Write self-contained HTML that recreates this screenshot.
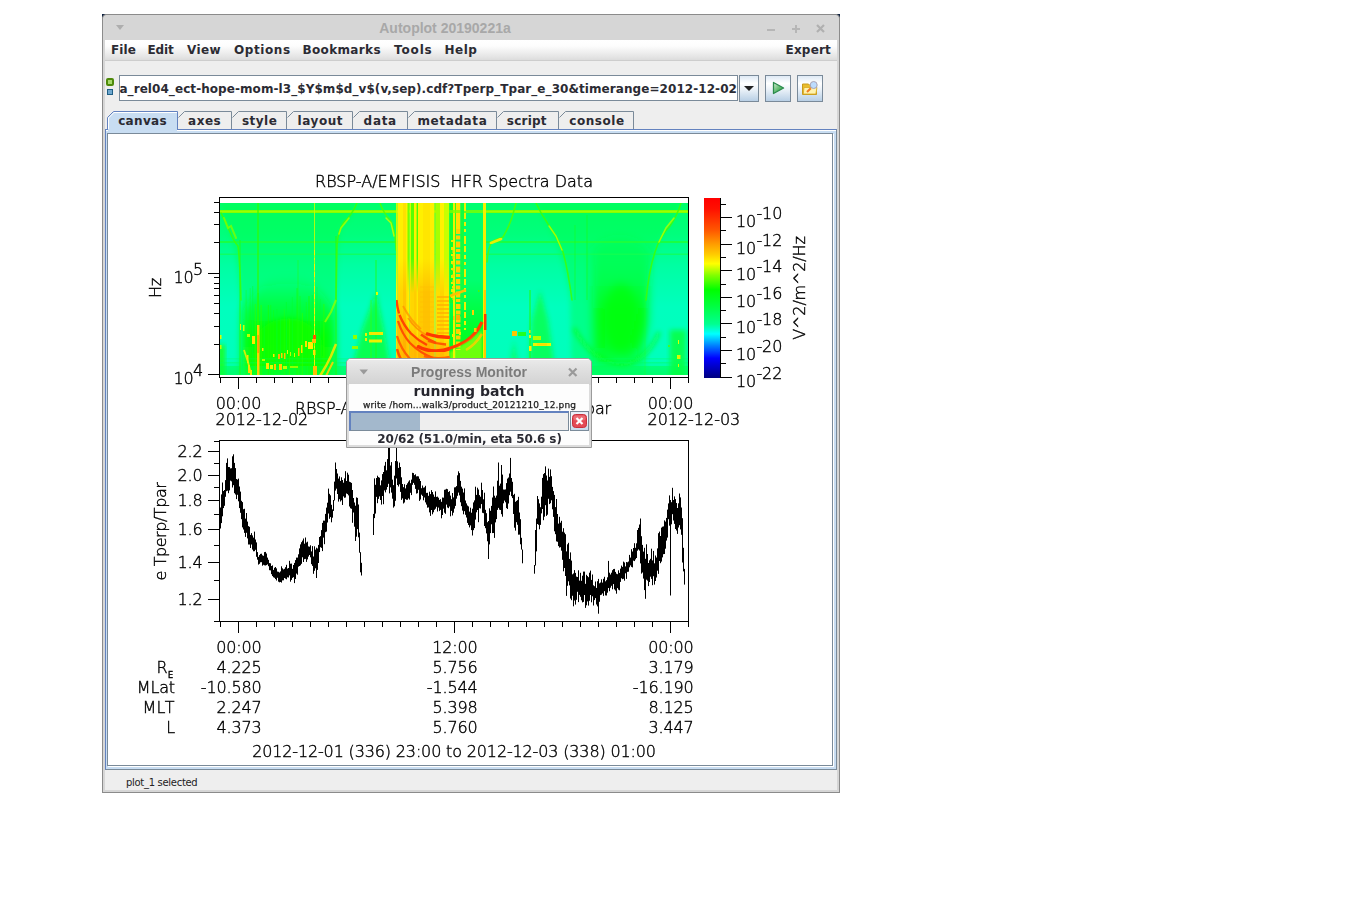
<!DOCTYPE html>
<html>
<head>
<meta charset="utf-8">
<title>Autoplot 20190221a</title>
<style>

html,body{margin:0;padding:0;background:#fff;}
body{width:1345px;height:916px;position:relative;overflow:hidden;font-family:"DejaVu Sans","Liberation Sans",sans-serif;color:#333;}
div,span{box-sizing:border-box;}
.a{position:absolute;}
.b12{font:bold 12px "DejaVu Sans","Liberation Sans",sans-serif;color:#2b2b33;white-space:nowrap;line-height:14px;}
#win{position:absolute;left:102px;top:14px;width:738px;height:779px;background:#eee;border:1px solid #8b8b8b;}
#wframe{position:absolute;left:103px;top:15px;width:736px;height:777px;border:2px solid #d6d6d6;border-top:none;}
#title{position:absolute;left:103px;top:15px;width:736px;height:25px;background:#d6d6d6;}
#title .t{position:absolute;left:242px;width:200px;top:5px;text-align:center;font:bold 14px "Liberation Sans",sans-serif;color:#a8a8a8;line-height:17px;}
#menubar{position:absolute;left:105px;top:40px;width:732px;height:20px;background:linear-gradient(#ffffff 0%,#fdfdfd 30%,#e4e4e4 85%,#dcdcdc 100%);}
#menusep{position:absolute;left:105px;top:60px;width:732px;height:1px;background:#cdcdcd;}
#menubar span{position:absolute;top:3px;}
#url{position:absolute;left:119px;top:75px;width:619px;height:26px;border:1px solid #7a8a99;background:#fff;overflow:hidden;}
#url span{position:absolute;right:0px;top:6px;letter-spacing:0.07px;}
.btn{position:absolute;top:75px;height:27px;border:1px solid #7a8a99;background:linear-gradient(#dfeaf5 0%,#ffffff 30%,#eaf1f8 55%,#b8cfe5 100%);}
#status{position:absolute;left:126px;top:776px;font:10px "DejaVu Sans","Liberation Sans",sans-serif;color:#222;line-height:13px;white-space:nowrap;letter-spacing:-0.3px;}
#panel{position:absolute;left:105px;top:129px;width:732px;height:641px;border:1px solid #6382bf;border-right-color:#7a8a99;border-bottom-color:#7a8a99;background:#c8ddf2;}
#panel2{position:absolute;left:107px;top:133px;width:726px;height:633px;border:1px solid #7a8a99;background:#fff;}

</style>
</head>
<body>
<div id="win"></div><div id="wframe"></div>
<div id="title"><div class="t">Autoplot 20190221a</div></div>
<svg class="a" style="left:102px;top:14px" width="738" height="5" viewBox="0 0 738 5"><path d="M0 0 h3.500 l-3.500 3.500z M738 0 h-3.500 l3.500 3.500z" fill="#0b1d3d"/><path d="M0.500 4 q0 -3.500 3.500 -3.500 M737.500 4 q0 -3.500 -3.500 -3.500" fill="none" stroke="#8b8b8b"/></svg>
<svg class="a" style="left:103px;top:15px" width="736" height="25" viewBox="0 0 736 25"><path d="M13 10 h8 l-4 5z" fill="#aeaeae"/><path d="M664 15 h8" stroke="#b6b6b6" stroke-width="2" fill="none"/><path d="M689 14 h8 M693 10 v8" stroke="#b6b6b6" stroke-width="2" fill="none"/><path d="M714 10 l7 7 M721 10 l-7 7" stroke="#b0b0b0" stroke-width="2.2" fill="none"/></svg>
<div id="menubar" class="b12"><span style="left:6px;letter-spacing:0.1px">File</span><span style="left:42.500px;letter-spacing:-0.1px">Edit</span><span style="left:82px;letter-spacing:0.35px">View</span><span style="left:129px;letter-spacing:0.58px">Options</span><span style="left:197.500px;letter-spacing:0.35px">Bookmarks</span><span style="left:289px;letter-spacing:0.85px">Tools</span><span style="left:339.500px;letter-spacing:0.5px">Help</span><span style="left:680.500px;letter-spacing:0.2px">Expert</span></div><div id="menusep"></div>
<div class="a" style="left:106px;top:78px;width:8px;height:8px;border:2px solid #4e8a0a;border-radius:2px;background:#a6d96a"></div>
<div class="a" style="left:107px;top:89px;width:6px;height:6px;border:1px solid #1f5f86;background:#6fa8cf"></div>
<div id="url" class="b12"><span>a_rel04_ect-hope-mom-l3_$Y$m$d_v$(v,sep).cdf?Tperp_Tpar_e_30&amp;timerange=2012-12-02</span></div>
<div class="btn" style="left:739px;width:20px"><svg width="18" height="25" viewBox="0 0 18 25"><path d="M4 10 h10 l-5 5z" fill="#222"/></svg></div>
<div class="btn" style="left:765px;width:26px"><svg width="24" height="25" viewBox="0 0 24 25"><defs><linearGradient id="pg" x1="0" y1="0" x2="1" y2="1"><stop offset="0" stop-color="#d8f0d8"/><stop offset="0.55" stop-color="#5cb86a"/><stop offset="1" stop-color="#3aa050"/></linearGradient></defs><path d="M7.500 6.500 L17.600 12 L7.500 17.500z" fill="url(#pg)" stroke="#2a8a4c" stroke-width="1.300" stroke-linejoin="round"/></svg></div>
<div class="btn" style="left:797px;width:26px"><svg width="24" height="25" viewBox="0 0 24 25"><path d="M4.500 8 h6 l1.500 1.500 h6.500 v9 h-14z" fill="#e9bd2c" stroke="#c79a1c" stroke-width="1"/><path d="M6 11.500 h13 l-1.200 6.500 h-12.500z" fill="#fff3ae" stroke="#d9aa22" stroke-width="0.800"/><circle cx="15.700" cy="9" r="3.500" fill="#bcdcff" stroke="#a9a2b4" stroke-width="1"/><path d="M12.800 12.200 L9 16" stroke="#ef7d22" stroke-width="2" fill="none"/></svg></div>
<svg class="a" style="left:105px;top:108px" width="732" height="26" viewBox="105 108 732 26"><path d="M178.5 117.5 L184.5 111.5 H231.5 V129.5" fill="none" stroke="#7a8a99" stroke-width="1"/><path d="M232.5 117.5 L238.5 111.5 H286.5 V129.5" fill="none" stroke="#7a8a99" stroke-width="1"/><path d="M287.5 117.5 L293.5 111.5 H352.5 V129.5" fill="none" stroke="#7a8a99" stroke-width="1"/><path d="M353.5 117.5 L359.5 111.5 H407.5 V129.5" fill="none" stroke="#7a8a99" stroke-width="1"/><path d="M408.5 117.5 L414.5 111.5 H496.5 V129.5" fill="none" stroke="#7a8a99" stroke-width="1"/><path d="M497.5 117.5 L503.5 111.5 H558.5 V129.5" fill="none" stroke="#7a8a99" stroke-width="1"/><path d="M559.5 117.5 L565.5 111.5 H633.5 V129.5" fill="none" stroke="#7a8a99" stroke-width="1"/><path d="M107.5 133 V117.5 L113.5 111.5 H177.5 V129.5 H178 V133 Z" fill="#c8ddf2" stroke="none"/><path d="M108.5 130 V118 L114 112.5 H177" fill="none" stroke="#ffffff" stroke-width="1"/><path d="M107.5 129.5 V117.5 L113.5 111.5 H177.5 V129.5" fill="none" stroke="#6382bf" stroke-width="1"/><text x="118.2" y="125" letter-spacing="0.32" font-family="DejaVu Sans, Liberation Sans, sans-serif" font-weight="bold" font-size="12" fill="#2b2b33">canvas</text><text x="188.1" y="125" letter-spacing="0.5" font-family="DejaVu Sans, Liberation Sans, sans-serif" font-weight="bold" font-size="12" fill="#2b2b33">axes</text><text x="242.0" y="125" letter-spacing="0.47" font-family="DejaVu Sans, Liberation Sans, sans-serif" font-weight="bold" font-size="12" fill="#2b2b33">style</text><text x="297.6" y="125" letter-spacing="0.54" font-family="DejaVu Sans, Liberation Sans, sans-serif" font-weight="bold" font-size="12" fill="#2b2b33">layout</text><text x="363.6" y="125" letter-spacing="0.7" font-family="DejaVu Sans, Liberation Sans, sans-serif" font-weight="bold" font-size="12" fill="#2b2b33">data</text><text x="417.4" y="125" letter-spacing="0.63" font-family="DejaVu Sans, Liberation Sans, sans-serif" font-weight="bold" font-size="12" fill="#2b2b33">metadata</text><text x="506.8" y="125" letter-spacing="0.22" font-family="DejaVu Sans, Liberation Sans, sans-serif" font-weight="bold" font-size="12" fill="#2b2b33">script</text><text x="569.2" y="125" letter-spacing="0.58" font-family="DejaVu Sans, Liberation Sans, sans-serif" font-weight="bold" font-size="12" fill="#2b2b33">console</text></svg>
<div id="panel"></div><div class="a" style="left:106px;top:130px;width:730px;height:1px;background:#fff"></div><div class="a" style="left:833px;top:134px;width:1px;height:632px;background:#fff"></div><div class="a" style="left:108px;top:766px;width:726px;height:1px;background:#fff"></div><div id="panel2"></div>
<div class="a" style="left:108px;top:129px;width:69px;height:2px;background:#c8ddf2"></div>
<div id="status">plot_1 selected</div>
<svg class="a" style="left:108px;top:134px;will-change:transform" width="724" height="631" viewBox="108 134 724 631">
<g stroke="none">
<rect x="220" y="203" width="468" height="172" fill="#00f57a"/>
<defs>
<clipPath id="spc"><rect x="220" y="203" width="468" height="172"/></clipPath>
<clipPath id="colc"><rect x="396" y="203" width="54" height="173"/></clipPath>
<linearGradient id="bg" x1="0" y1="0" x2="0" y2="1"><stop offset="0" stop-color="#00ff6c"/><stop offset="0.18" stop-color="#00ff7c"/><stop offset="0.36" stop-color="#00ffa2"/><stop offset="0.6" stop-color="#00ffbe"/><stop offset="0.9" stop-color="#00ffbc"/><stop offset="1" stop-color="#00fc8c"/></linearGradient>
<linearGradient id="colg" x1="0" y1="0" x2="0" y2="1"><stop offset="0" stop-color="#ffea00"/><stop offset="0.35" stop-color="#ffe600"/><stop offset="0.6" stop-color="#ffcc00"/><stop offset="0.8" stop-color="#ffb000"/><stop offset="1" stop-color="#ffc400"/></linearGradient>
<linearGradient id="fadeup" x1="0" y1="0" x2="0" y2="1"><stop offset="0" stop-color="#00ff00" stop-opacity="0"/><stop offset="0.45" stop-color="#00ff00" stop-opacity="0.55"/><stop offset="1" stop-color="#10ff00" stop-opacity="1"/></linearGradient>
<radialGradient id="blobR" cx="0.5" cy="0.62" r="0.6"><stop offset="0" stop-color="#00ff00" stop-opacity="1"/><stop offset="0.45" stop-color="#00ff10" stop-opacity="0.9"/><stop offset="1" stop-color="#00ff40" stop-opacity="0"/></radialGradient>
<filter id="b1" x="-20%" y="-20%" width="140%" height="140%"><feGaussianBlur stdDeviation="1"/></filter>
<filter id="b2" x="-20%" y="-20%" width="140%" height="140%"><feGaussianBlur stdDeviation="2.5"/></filter>
<filter id="b4" x="-30%" y="-30%" width="160%" height="160%"><feGaussianBlur stdDeviation="5"/></filter>
<filter id="b05" x="-20%" y="-20%" width="140%" height="140%"><feGaussianBlur stdDeviation="0.5"/></filter>
</defs>
<g clip-path="url(#spc)">
<rect x="220" y="203" width="468" height="173" fill="url(#bg)"/>
<linearGradient id="gL" x1="0" y1="0" x2="0" y2="1"><stop offset="0" stop-color="#00ff20" stop-opacity="0"/><stop offset="0.3" stop-color="#00ff10" stop-opacity="0.6"/><stop offset="0.6" stop-color="#04ff00" stop-opacity="0.95"/><stop offset="1" stop-color="#10ff00" stop-opacity="0.95"/></linearGradient>
<linearGradient id="gR" x1="0" y1="0" x2="0" y2="1"><stop offset="0" stop-color="#00ff30" stop-opacity="0.25"/><stop offset="0.3" stop-color="#00ff20" stop-opacity="0.5"/><stop offset="0.55" stop-color="#00ff08" stop-opacity="0.8"/><stop offset="0.85" stop-color="#00ff08" stop-opacity="0.8"/><stop offset="1" stop-color="#00ff10" stop-opacity="0.5"/></linearGradient>
<path d="M240 376 L240 300 Q238 262 232 240 L222 212 L222 203 L356 203 Q350 220 342 228 Q337 240 337 300 L337 376 Z" fill="#00ff48" opacity="0.42" filter="url(#b2)"/>
<path d="M572 376 L570 300 Q564 255 548 226 L536 203 L680 203 Q672 222 662 236 Q650 262 646 300 L646 376 Z" fill="#00ff48" opacity="0.42" filter="url(#b2)"/>
<path d="M243 376 L243 310 Q262 276 290 276 Q318 278 334 312 L334 376 Z" fill="url(#gL)" filter="url(#b4)"/>
<path d="M252 376 L254 336 Q268 318 290 318 Q312 320 322 340 L324 376 Z" fill="#08ff00" opacity="0.95" filter="url(#b2)"/>
<rect x="218" y="345" width="7" height="34" fill="#20ff00" filter="url(#b2)" opacity="0.8"/>
<path d="M594 366 L592 250 Q600 238 622 238 Q644 240 650 255 L648 320 Q644 352 630 364 Z" fill="url(#gR)" filter="url(#b4)"/>
<ellipse cx="621" cy="318" rx="18" ry="34" fill="#00ff00" opacity="0.6" filter="url(#b4)"/>
<path d="M574 328 Q590 360 622 365 Q648 360 659 332" fill="none" stroke="#10ff10" stroke-width="3.500" filter="url(#b2)" opacity="0.7"/>
<path d="M596 203 V290" stroke="#10ff10" stroke-width="3" opacity="0.6" filter="url(#b1)"/>
<path d="M350 376 L362 330 L376 292 L384 330 L392 376 Z" fill="#10ff10" filter="url(#b2)" opacity="0.6"/>
<path d="M528 376 L532 320 L540 290 L548 320 L556 376 Z" fill="#10ff20" filter="url(#b2)" opacity="0.6"/>
<path d="M508 376 L514 340 L520 376 Z" fill="#10ff20" filter="url(#b2)" opacity="0.5"/>
<rect x="670" y="330" width="16" height="50" fill="#10ff10" filter="url(#b2)" opacity="0.6"/>
<rect x="220" y="366" width="468" height="10" fill="#00ff50" opacity="0.5"/>
<rect x="220" y="362" width="468" height="1.500" fill="#00ff60" opacity="0.4"/>
<rect x="220" y="358" width="468" height="1.500" fill="#00ff60" opacity="0.3"/>
<rect x="220" y="210" width="468" height="3" fill="#7dff00"/>
<rect x="220" y="210.800" width="468" height="1.400" fill="#9cff00"/>
<rect x="220" y="241" width="468" height="2" fill="#1cff3c" opacity="0.9"/>
<rect x="220" y="253.500" width="468" height="1.500" fill="#14ff50" opacity="0.7"/>
<rect x="257.25" y="203" width="1.5" height="173" fill="#30ff00" opacity="0.8"/>
<rect x="239.4" y="240" width="1.2" height="136" fill="#20ff10" opacity="0.7"/>
<rect x="335.4" y="236" width="1.2" height="140" fill="#20ff10" opacity="0.8"/>
<rect x="297.5" y="260" width="1" height="116" fill="#20ff10" opacity="0.5"/>
<rect x="375.4" y="260" width="1.2" height="116" fill="#20ff10" opacity="0.7"/>
<rect x="586.0" y="215" width="2" height="85" fill="#10ff20" opacity="0.35"/>
<rect x="574.0" y="225" width="2" height="75" fill="#10ff20" opacity="0.3"/>
<rect x="529.25" y="290" width="1.5" height="86" fill="#20ff10" opacity="0.7"/>
<rect x="370.5" y="300" width="1" height="76" fill="#40ff00" opacity="0.6"/>
<rect x="644.5" y="280" width="1" height="96" fill="#20ff20" opacity="0.3"/>
<rect x="245.6" y="290" width="1" height="86" fill="#18ff00" opacity="0.32"/>
<rect x="249.7" y="288" width="1" height="88" fill="#18ff00" opacity="0.32"/>
<rect x="252.2" y="286" width="1" height="90" fill="#00ff30" opacity="0.47"/>
<rect x="254.8" y="304" width="1" height="72" fill="#30ff00" opacity="0.63"/>
<rect x="257.6" y="293" width="1" height="83" fill="#18ff00" opacity="0.53"/>
<rect x="260.6" y="305" width="1" height="71" fill="#30ff00" opacity="0.69"/>
<rect x="263.7" y="315" width="1" height="61" fill="#00ff30" opacity="0.47"/>
<rect x="267.8" y="305" width="1" height="71" fill="#18ff00" opacity="0.63"/>
<rect x="270.2" y="305" width="1" height="71" fill="#18ff00" opacity="0.38"/>
<rect x="273.1" y="310" width="1" height="66" fill="#18ff00" opacity="0.32"/>
<rect x="276.4" y="309" width="1" height="67" fill="#00ff30" opacity="0.61"/>
<rect x="280.0" y="317" width="1" height="59" fill="#00ff30" opacity="0.42"/>
<rect x="283.8" y="309" width="1" height="67" fill="#30ff00" opacity="0.33"/>
<rect x="285.9" y="302" width="1" height="74" fill="#00ff30" opacity="0.59"/>
<rect x="289.0" y="319" width="1" height="57" fill="#30ff00" opacity="0.50"/>
<rect x="291.8" y="297" width="1" height="79" fill="#00ff30" opacity="0.47"/>
<rect x="296.5" y="288" width="1" height="88" fill="#18ff00" opacity="0.53"/>
<rect x="299.5" y="296" width="1" height="80" fill="#18ff00" opacity="0.44"/>
<rect x="301.8" y="313" width="1" height="63" fill="#30ff00" opacity="0.64"/>
<rect x="305.8" y="302" width="1" height="74" fill="#18ff00" opacity="0.33"/>
<rect x="308.5" y="296" width="1" height="80" fill="#18ff00" opacity="0.70"/>
<rect x="311.7" y="295" width="1" height="81" fill="#00ff30" opacity="0.65"/>
<rect x="313.9" y="318" width="1" height="58" fill="#00ff30" opacity="0.37"/>
<rect x="316.5" y="287" width="1" height="89" fill="#00ff30" opacity="0.35"/>
<rect x="319.9" y="299" width="1" height="77" fill="#00ff30" opacity="0.33"/>
<rect x="323.4" y="304" width="1" height="72" fill="#30ff00" opacity="0.63"/>
<rect x="314" y="203" width="1" height="173" fill="#c8ff00" opacity="0.85"/>
<path d="M314.5 250 V376" stroke="#ffee00" stroke-width="1" stroke-dasharray="5 3 2 4 6 2" opacity="0.9"/>
<rect x="257" y="325" width="2.500" height="51" fill="#ffd000" filter="url(#b05)"/>
<rect x="257.300" y="335" width="2" height="18" fill="#ffa000"/>
<path d="M221 213 Q226 222 230 232 T238 246 Q240 262 241 300" fill="none" stroke="#40ff00" stroke-width="1.60" opacity="0.8" filter="url(#b05)" stroke-linecap="round"/>
<path d="M224 218 L228 228 L231 226 L236 238" fill="none" stroke="#80ff00" stroke-width="2.00" opacity="0.8" filter="url(#b05)" stroke-linecap="round"/>
<path d="M357 203 Q352 215 344 222 Q338 230 337 245 L336 300" fill="none" stroke="#40ff00" stroke-width="1.60" opacity="0.8" filter="url(#b05)" stroke-linecap="round"/>
<path d="M349 218 L341 228 L339 234" fill="none" stroke="#a0ff00" stroke-width="1.60" opacity="0.9" filter="url(#b05)" stroke-linecap="round"/>
<path d="M380 203 Q384 214 390 220 Q395 226 396 250" fill="none" stroke="#50ff00" stroke-width="1.60" opacity="0.8" filter="url(#b05)" stroke-linecap="round"/>
<path d="M386 218 L391 223 L394 236" fill="none" stroke="#c0ff00" stroke-width="1.44" opacity="0.9" filter="url(#b05)" stroke-linecap="round"/>
<path d="M487 262 Q488 246 493 241 L503 237 Q510 225 513 214 L516 203" fill="none" stroke="#50ff00" stroke-width="1.60" opacity="0.85" filter="url(#b05)" stroke-linecap="round"/>
<path d="M491 243 L501 239" fill="none" stroke="#f0f000" stroke-width="2.80" opacity="0.95" filter="url(#b05)" stroke-linecap="round"/>
<path d="M536 203 Q541 214 548 224 Q556 234 563 252 Q568 270 572 300" fill="none" stroke="#40ff00" stroke-width="1.60" opacity="0.8" filter="url(#b05)" stroke-linecap="round"/>
<path d="M549 226 L556 236 L562 250" fill="none" stroke="#b0ff00" stroke-width="1.44" opacity="0.9" filter="url(#b05)" stroke-linecap="round"/>
<path d="M681 203 Q677 216 670 226 Q660 236 655 252 Q649 270 646 300" fill="none" stroke="#40ff00" stroke-width="1.60" opacity="0.8" filter="url(#b05)" stroke-linecap="round"/>
<path d="M674 218 L666 228 L659 242" fill="none" stroke="#b0ff00" stroke-width="1.60" opacity="0.85" filter="url(#b05)" stroke-linecap="round"/>
<linearGradient id="cg0" x1="0" y1="0" x2="0" y2="1"><stop offset="0" stop-color="#c0ff00"/><stop offset="0.32" stop-color="#c0ff00"/><stop offset="0.52" stop-color="#fff600"/><stop offset="1" stop-color="#fff600"/></linearGradient>
<rect x="396" y="203" width="1.5" height="173" fill="url(#cg0)"/>
<linearGradient id="cg1" x1="0" y1="0" x2="0" y2="1"><stop offset="0" stop-color="#fff000"/><stop offset="0.32" stop-color="#fff000"/><stop offset="0.52" stop-color="#ffd600"/><stop offset="1" stop-color="#ffd600"/></linearGradient>
<rect x="397.5" y="203" width="5.5" height="173" fill="url(#cg1)"/>
<linearGradient id="cg2" x1="0" y1="0" x2="0" y2="1"><stop offset="0" stop-color="#ffe000"/><stop offset="0.32" stop-color="#ffe000"/><stop offset="0.52" stop-color="#ffc600"/><stop offset="1" stop-color="#ffc600"/></linearGradient>
<rect x="403" y="203" width="3" height="173" fill="url(#cg2)"/>
<linearGradient id="cg3" x1="0" y1="0" x2="0" y2="1"><stop offset="0" stop-color="#fff000"/><stop offset="0.32" stop-color="#fff000"/><stop offset="0.52" stop-color="#ffde00"/><stop offset="1" stop-color="#ffde00"/></linearGradient>
<rect x="406" y="203" width="2" height="173" fill="url(#cg3)"/>
<linearGradient id="cg4" x1="0" y1="0" x2="0" y2="1"><stop offset="0" stop-color="#78ff00"/><stop offset="0.32" stop-color="#78ff00"/><stop offset="0.52" stop-color="#ffee00"/><stop offset="1" stop-color="#ffee00"/></linearGradient>
<rect x="407.5" y="203" width="2.0" height="173" fill="url(#cg4)"/>
<linearGradient id="cg5" x1="0" y1="0" x2="0" y2="1"><stop offset="0" stop-color="#d0ff00"/><stop offset="0.32" stop-color="#d0ff00"/><stop offset="0.52" stop-color="#ffda00"/><stop offset="1" stop-color="#ffda00"/></linearGradient>
<rect x="409.5" y="203" width="1.5" height="173" fill="url(#cg5)"/>
<linearGradient id="cg6" x1="0" y1="0" x2="0" y2="1"><stop offset="0" stop-color="#58ff00"/><stop offset="0.32" stop-color="#58ff00"/><stop offset="0.52" stop-color="#ffd600"/><stop offset="1" stop-color="#ffd600"/></linearGradient>
<rect x="411" y="203" width="3" height="173" fill="url(#cg6)"/>
<linearGradient id="cg7" x1="0" y1="0" x2="0" y2="1"><stop offset="0" stop-color="#fff000"/><stop offset="0.32" stop-color="#fff000"/><stop offset="0.52" stop-color="#ffce00"/><stop offset="1" stop-color="#ffce00"/></linearGradient>
<rect x="414" y="203" width="3" height="173" fill="url(#cg7)"/>
<linearGradient id="cg8" x1="0" y1="0" x2="0" y2="1"><stop offset="0" stop-color="#48ff00"/><stop offset="0.32" stop-color="#48ff00"/><stop offset="0.52" stop-color="#ffe600"/><stop offset="1" stop-color="#ffe600"/></linearGradient>
<rect x="416.6" y="203" width="1.5" height="173" fill="url(#cg8)"/>
<linearGradient id="cg9" x1="0" y1="0" x2="0" y2="1"><stop offset="0" stop-color="#fff000"/><stop offset="0.32" stop-color="#fff000"/><stop offset="0.52" stop-color="#ffca00"/><stop offset="1" stop-color="#ffca00"/></linearGradient>
<rect x="418" y="203" width="5" height="173" fill="url(#cg9)"/>
<linearGradient id="cg10" x1="0" y1="0" x2="0" y2="1"><stop offset="0" stop-color="#ffe600"/><stop offset="0.32" stop-color="#ffe600"/><stop offset="0.52" stop-color="#ffc200"/><stop offset="1" stop-color="#ffc200"/></linearGradient>
<rect x="423" y="203" width="7" height="173" fill="url(#cg10)"/>
<linearGradient id="cg11" x1="0" y1="0" x2="0" y2="1"><stop offset="0" stop-color="#fff000"/><stop offset="0.32" stop-color="#fff000"/><stop offset="0.52" stop-color="#ffce00"/><stop offset="1" stop-color="#ffce00"/></linearGradient>
<rect x="430" y="203" width="4.5" height="173" fill="url(#cg11)"/>
<linearGradient id="cg12" x1="0" y1="0" x2="0" y2="1"><stop offset="0" stop-color="#b0ff00"/><stop offset="0.32" stop-color="#b0ff00"/><stop offset="0.52" stop-color="#ffff00"/><stop offset="1" stop-color="#ffff00"/></linearGradient>
<rect x="434.5" y="203" width="1.0" height="173" fill="url(#cg12)"/>
<linearGradient id="cg13" x1="0" y1="0" x2="0" y2="1"><stop offset="0" stop-color="#a8ff00"/><stop offset="0.32" stop-color="#a8ff00"/><stop offset="0.52" stop-color="#ffde00"/><stop offset="1" stop-color="#ffde00"/></linearGradient>
<rect x="435.5" y="203" width="4.5" height="173" fill="url(#cg13)"/>
<linearGradient id="cg14" x1="0" y1="0" x2="0" y2="1"><stop offset="0" stop-color="#fff200"/><stop offset="0.32" stop-color="#fff200"/><stop offset="0.52" stop-color="#ffd600"/><stop offset="1" stop-color="#ffd600"/></linearGradient>
<rect x="440" y="203" width="5" height="173" fill="url(#cg14)"/>
<linearGradient id="cg15" x1="0" y1="0" x2="0" y2="1"><stop offset="0" stop-color="#c8ff00"/><stop offset="0.32" stop-color="#c8ff00"/><stop offset="0.52" stop-color="#ffe600"/><stop offset="1" stop-color="#ffe600"/></linearGradient>
<rect x="444" y="203" width="5.5" height="173" fill="url(#cg15)"/>
<rect x="449.500" y="203" width="34" height="173" fill="#00ff70"/>
<rect x="449.500" y="280" width="34" height="96" fill="url(#fadeup)"/>
<rect x="449.500" y="203" width="3.500" height="100" fill="#10ff30"/>
<rect x="453" y="203" width="2" height="173" fill="#f0f000"/>
<rect x="455" y="203" width="1" height="173" fill="#30ff20"/>
<rect x="456" y="203" width="4.500" height="26" fill="#ffe000"/>
<path d="M458.2 229 V350" stroke="#ffd000" stroke-width="4.500" stroke-dasharray="5 1.500 4 2 6 1.500 3 2"/>
<path d="M452 240 V300" stroke="#e8f000" stroke-width="2" stroke-dasharray="2 5 3 4"/>
<rect x="449.500" y="210" width="33.500" height="3" fill="#7dff00" opacity="0.8"/>
<rect x="460.500" y="203" width="3.500" height="100" fill="#10ff40"/>
<path d="M465 203 V330" stroke="#f0f000" stroke-width="2" stroke-dasharray="8 2 6 3 4 3 3 4"/>
<path d="M453.500 250 V300" stroke="#f0e000" stroke-width="2" stroke-dasharray="3 3"/>
<rect x="483" y="203" width="3" height="173" fill="#f4f000"/>
<rect x="484" y="290" width="2" height="86" fill="#ffc800"/>
<rect x="484" y="314" width="2.500" height="16" fill="#ff3800"/>
<g clip-path="url(#colc)">
<path d="M396 300 Q404 330 420 340 L450 344 L450 376 L396 376 Z" fill="#ff9000" opacity="0.38" filter="url(#b2)"/>
<path d="M396.500 300 Q397.200 307 399 313.500" fill="none" stroke="#ff4400" stroke-width="2.4" opacity="1.0" filter="url(#b05)" stroke-linecap="butt"/>
<path d="M399.500 315 Q404 326 411 333.500 Q418 340.500 427 345" fill="none" stroke="#ff4400" stroke-width="2.4" opacity="1.0" filter="url(#b05)" stroke-linecap="butt"/>
<path d="M398 321 Q402 334 410 343 Q420 353 433 358" fill="none" stroke="#ff4c00" stroke-width="2.3" opacity="0.95" filter="url(#b05)" stroke-linecap="butt"/>
<path d="M397 336 Q401 349 410 359 Q417 366 426 370" fill="none" stroke="#ff5800" stroke-width="2.4" opacity="0.9" filter="url(#b05)" stroke-linecap="butt"/>
<path d="M397 349 Q400 360 407 369 L412 374" fill="none" stroke="#ff4800" stroke-width="2.6" opacity="0.95" filter="url(#b05)" stroke-linecap="butt"/>
<path d="M397 362 Q399 369 403 375" fill="none" stroke="#ff5000" stroke-width="2.4" opacity="0.9" filter="url(#b05)" stroke-linecap="butt"/>
<path d="M403 306 Q411 321 421 329" fill="none" stroke="#ff9000" stroke-width="2" opacity="0.7" filter="url(#b05)" stroke-linecap="butt"/>
<path d="M408 318 Q416 330 428 336" fill="none" stroke="#ff8000" stroke-width="1.8" opacity="0.7" filter="url(#b05)" stroke-linecap="butt"/>
<path d="M426 333.500 Q432 335.500 438 336.500 L450 337.500" fill="none" stroke="#ff3800" stroke-width="3.4" opacity="1.0" filter="url(#b05)" stroke-linecap="butt"/>
<path d="M421 334.500 Q428 340 436 343" fill="none" stroke="#ff4400" stroke-width="2.6" opacity="0.95" filter="url(#b05)" stroke-linecap="butt"/>
<path d="M428 341 Q436 344 446 344.500" fill="none" stroke="#ff5000" stroke-width="2.4" opacity="0.9" filter="url(#b05)" stroke-linecap="butt"/>
<path d="M417 346 Q426 351 436 351 Q444 351 450 348.500" fill="none" stroke="#ff3800" stroke-width="3.6" opacity="1.0" filter="url(#b05)" stroke-linecap="butt"/>
<path d="M424 356 Q436 360 450 357" fill="none" stroke="#ff5c00" stroke-width="2.8" opacity="0.9" filter="url(#b05)" stroke-linecap="butt"/>
<path d="M430 365 Q440 367 450 365" fill="none" stroke="#ff7000" stroke-width="2.4" opacity="0.8" filter="url(#b05)" stroke-linecap="butt"/>
<rect x="437" y="296" width="12" height="2" fill="#ffb000" opacity="0.75"/>
<rect x="437" y="300" width="12" height="2" fill="#ffb000" opacity="0.75"/>
<rect x="437" y="304" width="12" height="2" fill="#ffb000" opacity="0.75"/>
<rect x="437" y="308" width="12" height="2" fill="#ffb000" opacity="0.75"/>
<rect x="437" y="312" width="12" height="2" fill="#ffb000" opacity="0.75"/>
<rect x="437" y="316" width="12" height="2" fill="#ffb000" opacity="0.75"/>
<rect x="437" y="320" width="12" height="2" fill="#ffb000" opacity="0.75"/>
<rect x="437" y="324" width="12" height="2" fill="#ffb000" opacity="0.75"/>
<rect x="437" y="328" width="12" height="2" fill="#ffb000" opacity="0.75"/>
<rect x="437" y="332" width="12" height="2" fill="#ffb000" opacity="0.75"/>
<rect x="420" y="286" width="14" height="2" fill="#ffc000" opacity="0.35"/>
<rect x="420" y="291" width="14" height="2" fill="#ffc000" opacity="0.35"/>
<rect x="420" y="296" width="14" height="2" fill="#ffc000" opacity="0.35"/>
<rect x="420" y="301" width="14" height="2" fill="#ffc000" opacity="0.35"/>
<rect x="420" y="306" width="14" height="2" fill="#ffc000" opacity="0.35"/>
<rect x="420" y="311" width="14" height="2" fill="#ffc000" opacity="0.35"/>
<rect x="420" y="316" width="14" height="2" fill="#ffc000" opacity="0.35"/>
<rect x="420" y="321" width="14" height="2" fill="#ffc000" opacity="0.35"/>
<rect x="420" y="326" width="14" height="2" fill="#ffc000" opacity="0.35"/>
</g>
<path d="M449 348.500 Q458 346 466 341 Q476 335 482 322" fill="none" stroke="#ff4000" stroke-width="3.2" opacity="1.0" filter="url(#b05)" stroke-linecap="butt"/>
<path d="M466 350 Q475 345 482 334" fill="none" stroke="#ffb000" stroke-width="2.5" opacity="0.9" filter="url(#b05)" stroke-linecap="butt"/>
<path d="M449 338 L453 338" fill="none" stroke="#ff3800" stroke-width="3.5" opacity="1.0" filter="url(#b05)" stroke-linecap="butt"/>
<path d="M450 296 L458 293 L466 290" fill="none" stroke="#ffc000" stroke-width="2.5" opacity="0.95" filter="url(#b05)" stroke-linecap="butt"/>
<path d="M450 352 Q466 344 482 330 L482 360 L450 362 Z" fill="#e8ff00" opacity="0.45" filter="url(#b1)"/>
<rect x="220" y="335" width="1.5" height="4" fill="#e0ff00"/>
<rect x="220" y="345" width="1.5" height="4" fill="#c0ff00"/>
<rect x="240" y="324" width="1" height="6" fill="#ffe000"/>
<rect x="243" y="325" width="1.5" height="6" fill="#d0ff00"/>
<rect x="247" y="334" width="3" height="3" fill="#c0ff00"/>
<rect x="252" y="336" width="3" height="8" fill="#ffe800"/>
<rect x="262" y="348" width="1.5" height="3" fill="#ffe800"/>
<rect x="273" y="354" width="1.5" height="3" fill="#ffe800"/>
<rect x="278" y="354" width="2" height="5" fill="#ffb000"/>
<rect x="281" y="353" width="1.5" height="5" fill="#ffd000"/>
<rect x="284" y="353" width="1.5" height="6" fill="#ffc000"/>
<rect x="287" y="350" width="1" height="4" fill="#e0ff00"/>
<rect x="290" y="352" width="1" height="4" fill="#c0ff00"/>
<rect x="294" y="353" width="1" height="4" fill="#d0ff00"/>
<rect x="262" y="359" width="3" height="2" fill="#b0ff00"/>
<rect x="266" y="363" width="3" height="6" fill="#ffe800"/>
<rect x="270" y="365" width="3" height="4" fill="#e0ff00"/>
<rect x="274" y="364" width="2" height="6" fill="#ffc800"/>
<rect x="279" y="364" width="3" height="6" fill="#ffd000"/>
<rect x="283" y="366" width="4" height="3" fill="#c0ff00"/>
<rect x="290" y="366" width="8" height="2" fill="#90ff00"/>
<rect x="298" y="348" width="1.5" height="8" fill="#ffc000"/>
<rect x="301" y="345" width="1.5" height="8" fill="#ffe000"/>
<rect x="305" y="341" width="2" height="6" fill="#ffe000"/>
<rect x="308" y="342" width="5" height="7" fill="#fff000"/>
<rect x="313" y="335" width="3" height="5" fill="#ff5000"/>
<rect x="312" y="339" width="4" height="4" fill="#ffc000"/>
<rect x="313" y="350" width="2.5" height="5" fill="#ffe000"/>
<rect x="313" y="366" width="4" height="10" fill="#ffc000"/>
<rect x="247" y="355" width="1.5" height="8" fill="#ffe000"/>
<rect x="248" y="365" width="2" height="8" fill="#ffd000"/>
<rect x="250" y="370" width="2" height="6" fill="#ffe000"/>
<rect x="353" y="335" width="4" height="4" fill="#90ff00"/>
<rect x="352" y="346" width="6" height="3" fill="#90ff00"/>
<rect x="365" y="333" width="2" height="3" fill="#f0f000"/>
<rect x="365" y="338" width="2" height="3" fill="#f0f000"/>
<rect x="369" y="332" width="14" height="3" fill="#f4e800"/>
<rect x="369" y="339.5" width="13" height="3" fill="#f0f000"/>
<rect x="376" y="292" width="2" height="3" fill="#e0ff00"/>
<rect x="512" y="331" width="5" height="5" fill="#ffc400"/>
<rect x="518" y="332" width="8" height="4" fill="#20ff20"/>
<rect x="529" y="330" width="1.5" height="3" fill="#ffe000"/>
<rect x="529" y="335" width="2" height="3" fill="#fff000"/>
<rect x="529" y="346" width="2.5" height="5" fill="#fff000"/>
<rect x="533" y="336" width="8" height="4" fill="#b0ff00"/>
<rect x="533" y="343" width="18" height="3" fill="#f0f400"/>
<rect x="537" y="343.5" width="10" height="2" fill="#ffd800"/>
<rect x="677" y="355" width="3.5" height="4" fill="#e0f800"/>
<rect x="678" y="340" width="1" height="4" fill="#e0ff00"/>
<rect x="678" y="364" width="1" height="3" fill="#d0ff00"/>
<rect x="668" y="345" width="2" height="2" fill="#40ff20"/>
<rect x="472" y="310" width="2" height="5" fill="#ffd000"/>
<rect x="456" y="315" width="4" height="5" fill="#ffb000"/>
<rect x="453" y="316" width="1.5" height="4" fill="#ffc000"/>
<rect x="452" y="286" width="2" height="2" fill="#ffe000"/>
<rect x="474" y="328" width="2.5" height="4" fill="#ffc800"/>
<rect x="459" y="332" width="2" height="3" fill="#f0f000"/>
<rect x="452" y="334" width="2" height="3" fill="#f0f000"/>
<rect x="478" y="290" width="1.5" height="2" fill="#40ff00"/>
<path d="M320 376 L326 366 L331 356 L336 344" fill="none" stroke="#f0e800" stroke-width="2.500" opacity="0.9" filter="url(#b05)"/>
<path d="M326 376 L333 362" fill="none" stroke="#ffd000" stroke-width="2" opacity="0.9"/>
<path d="M244 350 L248 362 L251 374" fill="none" stroke="#e8f000" stroke-width="1.800" opacity="0.9"/>
<path d="M325 322 L331 312 L336 300" fill="none" stroke="#90ff00" stroke-width="2" opacity="0.8"/>
</g>
</g>
<g font-family="DejaVu Sans, Liberation Sans, sans-serif" font-weight="200" font-size="16" stroke="#000" stroke-width="0.4" letter-spacing="-0.15" fill="#000">
<text x="454" y="187" text-anchor="middle" letter-spacing="0">RBSP-A/EMFISIS&#160; HFR Spectra Data</text>
<g stroke="#000" stroke-width="1" fill="none" shape-rendering="crispEdges">
<path d="M219.5 377.5 V197.5 H688.5 V383"/>
<path d="M219.5 377.5 H688.5"/>
<path d="M214 202.5 H219 M214 212.5 H219 M214 224.5 H219 M214 242.5 H219 M214 277.5 H219 M214 283.5 H219 M214 288.5 H219 M214 295.5 H219 M214 303.5 H219 M214 313.5 H219 M214 326.5 H219 M214 344.5 H219 M208 273.5 H219 M208 374.5 H219 "/>
<path d="M220.5 377 V383 M238.5 377 V389 M256.5 377 V383 M274.5 377 V383 M292.5 377 V383 M310.5 377 V383 M328.5 377 V383 M346.5 377 V383 M364.5 377 V383 M382.5 377 V383 M400.5 377 V383 M418.5 377 V383 M436.5 377 V383 M454.5 377 V389 M472.5 377 V383 M490.5 377 V383 M508.5 377 V383 M526.5 377 V383 M544.5 377 V383 M562.5 377 V383 M580.5 377 V383 M598.5 377 V383 M616.5 377 V383 M634.5 377 V383 M652.5 377 V383 M670.5 377 V389 M688.5 377 V383 "/>
<path d="M220.5 621 V627 M238.5 621 V633 M256.5 621 V627 M274.5 621 V627 M292.5 621 V627 M310.5 621 V627 M328.5 621 V627 M346.5 621 V627 M364.5 621 V627 M382.5 621 V627 M400.5 621 V627 M418.5 621 V627 M436.5 621 V627 M454.5 621 V633 M472.5 621 V627 M490.5 621 V627 M508.5 621 V627 M526.5 621 V627 M544.5 621 V627 M562.5 621 V627 M580.5 621 V627 M598.5 621 V627 M616.5 621 V627 M634.5 621 V627 M652.5 621 V627 M670.5 621 V633 M688.5 621 V627 "/>
<path d="M219.5 621.5 V440.5 H688.5 V627"/>
<path d="M219.5 621.5 H688.5"/>
<path d="M208 451.5 H219 M208 475.5 H219 M208 500.5 H219 M208 529.5 H219 M208 562.5 H219 M208 599.5 H219 M214 441.5 H219 M214 463.5 H219 M214 487.5 H219 M214 514.5 H219 M214 545.5 H219 M214 580.5 H219 M214 621.5 H219 "/>
<path d="M720.5 198 V377.5"/>
<path d="M721 217.5 H732 M721 244.5 H732 M721 270.5 H732 M721 297.5 H732 M721 323.5 H732 M721 350.5 H732 M721 377.5 H732 M721 204.5 H726 M721 230.5 H726 M721 257.5 H726 M721 284.5 H726 M721 310.5 H726 M721 337.5 H726 M721 363.5 H726 "/>
</g>
<defs><linearGradient id="cb" x1="0" y1="0" x2="0" y2="1"><stop offset="0" stop-color="#ff0000"/><stop offset="0.06" stop-color="#ff1000"/><stop offset="0.18" stop-color="#ff5800"/><stop offset="0.26" stop-color="#ffa000"/><stop offset="0.31" stop-color="#ffc800"/><stop offset="0.365" stop-color="#ffff00"/><stop offset="0.43" stop-color="#80ff00"/><stop offset="0.51" stop-color="#00ff00"/><stop offset="0.60" stop-color="#00ff40"/><stop offset="0.70" stop-color="#00ff90"/><stop offset="0.755" stop-color="#00ffff"/><stop offset="0.82" stop-color="#0080ff"/><stop offset="0.89" stop-color="#0000ff"/><stop offset="1" stop-color="#000080"/></linearGradient></defs>
<rect x="704" y="198" width="16" height="180" fill="url(#cb)" stroke="none"/>
<text x="736" y="226.8" text-anchor="start" >10</text>
<text x="756.5" y="218.8" text-anchor="start" >-10</text>
<text x="736" y="253.8" text-anchor="start" >10</text>
<text x="756.5" y="245.8" text-anchor="start" >-12</text>
<text x="736" y="279.8" text-anchor="start" >10</text>
<text x="756.5" y="271.8" text-anchor="start" >-14</text>
<text x="736" y="306.8" text-anchor="start" >10</text>
<text x="756.5" y="298.8" text-anchor="start" >-16</text>
<text x="736" y="332.8" text-anchor="start" >10</text>
<text x="756.5" y="324.8" text-anchor="start" >-18</text>
<text x="736" y="359.8" text-anchor="start" >10</text>
<text x="756.5" y="351.8" text-anchor="start" >-20</text>
<text x="736" y="386.8" text-anchor="start" >10</text>
<text x="756.5" y="378.8" text-anchor="start" >-22</text>
<text transform="translate(805,288) rotate(-90)" text-anchor="middle">V^2/m^2/Hz</text>
<text x="173.5" y="283" text-anchor="start" >10</text>
<text x="193" y="275" text-anchor="start" >5</text>
<text x="173.5" y="384" text-anchor="start" >10</text>
<text x="193" y="376" text-anchor="start" >4</text>
<text transform="translate(161,288) rotate(-90)" text-anchor="middle">Hz</text>
<text x="238.5" y="409" text-anchor="middle" >00:00</text>
<text x="215.5" y="425" text-anchor="start" letter-spacing="-0.03">2012-12-02</text>
<text x="670.5" y="409" text-anchor="middle" >00:00</text>
<text x="647.5" y="425" text-anchor="start" letter-spacing="-0.03">2012-12-03</text>
<text x="295" y="414" text-anchor="start" >RBSP-A/ECT-HOPE</text>
<text x="611" y="414" text-anchor="end" >electron Tperp/Tpar</text>
<text x="202.5" y="457.3" text-anchor="end" >2.2</text>
<text x="202.5" y="481.3" text-anchor="end" >2.0</text>
<text x="202.5" y="506.3" text-anchor="end" >1.8</text>
<text x="202.5" y="535.3" text-anchor="end" >1.6</text>
<text x="202.5" y="568.3" text-anchor="end" >1.4</text>
<text x="202.5" y="605.3" text-anchor="end" >1.2</text>
<text transform="translate(166,531.500) rotate(-90)" text-anchor="middle" letter-spacing="-0.45">e Tperp/Tpar</text>
<text x="261.5" y="653" text-anchor="end" >00:00</text>
<text x="477.5" y="653" text-anchor="end" >12:00</text>
<text x="693.5" y="653" text-anchor="end" >00:00</text>
<text x="261.5" y="673" text-anchor="end" >4.225</text>
<text x="477.5" y="673" text-anchor="end" >5.756</text>
<text x="693.5" y="673" text-anchor="end" >3.179</text>
<text x="261.5" y="693" text-anchor="end" >-10.580</text>
<text x="477.5" y="693" text-anchor="end" >-1.544</text>
<text x="693.5" y="693" text-anchor="end" >-16.190</text>
<text x="261.5" y="713" text-anchor="end" >2.247</text>
<text x="477.5" y="713" text-anchor="end" >5.398</text>
<text x="693.5" y="713" text-anchor="end" >8.125</text>
<text x="261.5" y="733" text-anchor="end" >4.373</text>
<text x="477.5" y="733" text-anchor="end" >5.760</text>
<text x="693.5" y="733" text-anchor="end" >3.447</text>
<text x="167.5" y="673" text-anchor="end" >R</text>
<text x="168" y="677.5" font-size="8" font-weight="400">E</text>
<text x="175" y="693" text-anchor="end" >MLat</text>
<text x="142.5 156.6 164.7" y="713" text-anchor="start" letter-spacing="0">MLT</text>
<text x="175" y="733" text-anchor="end" >L</text>
<text x="454" y="757" text-anchor="middle" >2012-12-01 (336) 23:00 to 2012-12-03 (338) 01:00</text>
</g>
<g fill="none" stroke="#000" stroke-width="1"><path d="M220.5 507.5V528.5M221.5 494.4V523.1M222.5 482.5V516.3M223.5 491.0V508.1M224.5 490.0V505.8M225.5 480.1V496.8M226.5 462.9V491.2M227.5 458.4V490.7M228.5 467.0V493.2M229.5 467.1V490.4M230.5 468.4V480.7M231.5 468.2V481.4M232.5 456.3V487.5M233.5 454.3V485.2M234.5 462.9V493.2M235.5 468.1V494.5M236.5 479.0V499.1M237.5 479.6V494.8M238.5 478.6V501.3M239.5 486.5V508.1M240.5 491.6V512.8M241.5 500.8V519.2M242.5 502.1V527.4M243.5 509.2V529.5M244.5 508.8V532.9M245.5 518.6V536.9M246.5 513.0V532.8M247.5 521.6V538.4M248.5 526.1V544.5M249.5 526.8V544.5M250.5 534.9V548.0M251.5 533.1V544.5M252.5 535.4V549.6M253.5 537.6V551.3M254.5 531.6V551.2M255.5 539.5V549.8M256.5 542.4V556.8M257.5 552.1V559.7M258.5 556.9V564.6M259.5 555.1V563.8M260.5 553.9V562.3M261.5 553.7V562.2M262.5 555.3V565.7M263.5 555.8V564.8M264.5 552.1V565.3M265.5 551.9V565.5M266.5 553.5V565.1M267.5 557.6V564.4M268.5 559.8V566.2M269.5 563.1V570.2M270.5 563.3V570.4M271.5 566.0V574.2M272.5 565.4V576.1M273.5 569.9V577.3M274.5 567.8V577.8M275.5 567.0V579.1M276.5 568.4V580.5M277.5 571.6V577.8M278.5 571.8V581.7M279.5 572.5V582.3M280.5 571.4V582.0M281.5 566.3V582.6M282.5 568.3V580.4M283.5 569.4V580.3M284.5 568.8V578.0M285.5 567.2V578.7M286.5 564.8V579.3M287.5 568.6V577.3M288.5 568.0V577.5M289.5 560.8V575.4M290.5 563.7V581.7M291.5 563.6V579.9M292.5 568.8V577.9M293.5 565.0V577.2M294.5 562.9V583.1M295.5 560.1V579.0M296.5 557.6V573.6M297.5 557.6V574.7M298.5 554.3V566.7M299.5 548.4V566.0M300.5 544.4V565.3M301.5 542.2V563.8M302.5 540.6V557.3M303.5 538.5V562.0M304.5 543.7V559.2M305.5 537.5V558.9M306.5 542.5V561.9M307.5 541.7V559.4M308.5 546.4V556.6M309.5 546.7V555.0M310.5 545.3V557.3M311.5 551.4V564.2M312.5 546.1V565.9M313.5 556.5V573.8M314.5 546.3V570.8M315.5 549.6V568.3M316.5 547.7V574.8M317.5 548.5V569.9M318.5 544.9V563.0M319.5 537.0V552.1M320.5 536.1V547.2M321.5 530.1V547.9M322.5 522.9V551.1M323.5 520.6V537.6M324.5 520.7V544.2M325.5 513.9V532.2M326.5 507.6V531.6M327.5 502.7V522.5M328.5 488.6V513.5M329.5 493.8V518.8M330.5 495.3V517.1M331.5 504.8V522.3M332.5 509.4V517.7M333.5 500.0V510.9M334.5 481.6V500.5M335.5 462.5V490.6M336.5 469.0V488.7M337.5 473.5V494.0M338.5 478.6V501.6M339.5 476.4V499.2M340.5 480.9V501.5M341.5 477.3V500.3M342.5 480.0V505.0M343.5 482.7V496.4M344.5 478.4V497.8M345.5 471.2V497.5M346.5 481.0V493.5M347.5 472.7V494.1M348.5 474.7V495.4M349.5 481.7V506.5M350.5 482.2V508.3M351.5 482.9V508.8M352.5 490.0V522.8M353.5 498.0V512.5M354.5 502.5V526.7M355.5 505.7V534.4M356.5 497.4V536.7M357.5 497.9V529.1M358.5 504.5V537.3M359.5 532.6V552.7M360.5 552.2V572.3M361.5 562.8V575.5M373.5 513.9V535.0M374.5 478.4V518.1M375.5 484.8V513.6M376.5 478.0V496.9M377.5 475.7V503.2M378.5 477.1V498.9M379.5 477.7V496.4M380.5 485.3V500.0M381.5 480.4V504.6M382.5 474.1V496.0M383.5 472.0V504.2M384.5 465.7V490.4M385.5 461.9V492.4M386.5 470.3V489.7M387.5 459.1V487.0M388.5 447.1V483.8M389.5 446.9V493.4M390.5 465.5V487.4M391.5 462.1V492.6M392.5 479.6V498.7M393.5 485.1V507.6M394.5 475.7V506.3M395.5 461.0V500.8M396.5 449.8V478.5M397.5 461.4V485.0M398.5 467.9V486.5M399.5 462.6V484.3M400.5 467.0V491.9M401.5 477.3V499.9M402.5 484.0V498.4M403.5 487.2V503.5M404.5 484.2V502.5M405.5 488.4V499.1M406.5 484.9V499.8M407.5 483.3V499.8M408.5 481.6V498.4M409.5 480.3V499.6M410.5 483.2V492.8M411.5 479.6V495.1M412.5 472.8V484.8M413.5 473.1V482.9M414.5 475.1V484.8M415.5 474.3V488.9M416.5 476.4V493.6M417.5 476.2V493.2M418.5 476.4V489.8M419.5 478.8V500.9M420.5 481.0V499.5M421.5 488.2V494.7M422.5 485.5V495.9M423.5 487.7V500.3M424.5 487.3V497.5M425.5 485.8V502.4M426.5 492.9V504.6M427.5 492.8V507.7M428.5 495.8V507.4M429.5 491.7V512.4M430.5 494.1V515.9M431.5 490.1V510.0M432.5 492.0V514.3M433.5 494.5V512.3M434.5 496.8V509.8M435.5 491.4V508.7M436.5 496.9V506.8M437.5 496.6V511.5M438.5 497.7V507.6M439.5 499.9V511.1M440.5 499.2V509.9M441.5 501.8V518.3M442.5 497.5V515.0M443.5 497.7V508.7M444.5 489.8V512.7M445.5 489.5V513.8M446.5 488.8V504.6M447.5 489.2V507.5M448.5 492.0V508.2M449.5 491.1V506.5M450.5 495.6V516.3M451.5 499.2V510.9M452.5 493.0V515.5M453.5 497.4V512.7M454.5 487.4V508.6M455.5 487.2V505.9M456.5 486.1V498.7M457.5 475.3V495.8M458.5 471.3V492.6M459.5 473.1V495.4M460.5 480.9V502.3M461.5 486.7V506.2M462.5 488.6V510.6M463.5 492.5V514.3M464.5 488.4V511.2M465.5 500.5V514.8M466.5 503.4V517.5M467.5 505.5V522.9M468.5 506.4V525.0M469.5 511.6V527.4M470.5 507.7V525.4M471.5 512.7V530.1M472.5 508.7V535.5M473.5 502.4V530.2M474.5 500.4V528.1M475.5 486.7V519.6M476.5 494.9V512.3M477.5 487.7V510.0M478.5 489.5V522.2M479.5 495.1V508.2M480.5 496.7V508.5M481.5 482.7V504.1M482.5 490.0V512.8M483.5 499.3V513.2M484.5 492.7V526.0M485.5 509.8V528.2M486.5 513.2V533.4M487.5 522.2V541.3M488.5 521.0V553.6M489.5 508.3V544.4M490.5 510.8V533.1M491.5 505.9V524.3M492.5 497.5V533.1M493.5 486.5V533.0M494.5 495.7V537.9M495.5 497.7V522.4M496.5 495.6V519.1M497.5 480.7V509.9M498.5 462.5V507.9M499.5 485.7V509.7M500.5 483.6V510.0M501.5 465.0V514.2M502.5 474.6V516.7M503.5 489.5V503.3M504.5 489.6V500.6M505.5 489.4V502.3M506.5 483.1V508.1M507.5 478.6V509.0M508.5 477.5V503.5M509.5 473.5V495.2M510.5 457.9V491.7M511.5 478.0V496.2M512.5 481.8V498.1M513.5 494.9V514.0M514.5 493.8V527.7M515.5 501.8V530.6M516.5 500.9V522.2M517.5 500.1V524.8M518.5 496.8V534.7M519.5 512.5V534.6M520.5 519.2V544.3M521.5 537.8V549.6M522.5 549.5V563.3M534.5 565.0V573.7M535.5 530.0V565.5M536.5 518.5V551.4M537.5 496.0V524.0M538.5 499.2V524.8M539.5 503.4V529.3M540.5 507.2V524.9M541.5 496.7V513.4M542.5 477.9V509.0M543.5 474.1V520.2M544.5 473.0V516.7M545.5 466.4V505.2M546.5 475.5V515.9M547.5 480.5V514.7M548.5 468.6V498.8M549.5 476.9V504.1M550.5 469.4V503.2M551.5 476.2V500.3M552.5 486.9V509.3M553.5 491.1V516.9M554.5 494.9V531.3M555.5 507.1V534.2M556.5 499.0V541.4M557.5 514.0V541.8M558.5 523.6V546.1M559.5 516.8V547.6M560.5 522.7V547.2M561.5 520.8V550.7M562.5 531.7V559.8M563.5 528.2V571.3M564.5 532.6V568.0M565.5 534.2V576.0M566.5 551.4V595.9M567.5 544.3V585.8M568.5 542.8V581.3M569.5 558.9V585.4M570.5 552.4V598.6M571.5 560.6V600.2M572.5 574.3V595.8M573.5 573.4V606.3M574.5 570.1V600.5M575.5 572.9V604.6M576.5 576.6V599.8M577.5 577.0V591.8M578.5 570.3V602.1M579.5 580.6V594.9M580.5 572.8V596.8M581.5 580.8V600.3M582.5 575.7V602.4M583.5 571.6V601.9M584.5 571.6V595.0M585.5 583.8V607.9M586.5 574.8V605.3M587.5 576.1V601.4M588.5 577.2V605.6M589.5 572.7V600.8M590.5 570.6V595.0M591.5 579.9V602.3M592.5 574.5V596.3M593.5 585.3V605.5M594.5 586.2V600.1M595.5 581.5V598.1M596.5 587.9V604.5M597.5 581.2V606.4M598.5 578.9V604.6M599.5 583.3V601.8M600.5 582.5V595.1M601.5 579.3V594.7M602.5 582.6V593.4M603.5 578.8V595.9M604.5 576.8V591.2M605.5 581.3V595.4M606.5 580.1V595.5M607.5 577.3V592.7M608.5 560.9V588.0M609.5 572.7V591.2M610.5 574.5V587.7M611.5 572.7V585.8M612.5 570.2V589.3M613.5 569.1V584.1M614.5 568.9V589.4M615.5 571.9V590.6M616.5 573.7V593.7M617.5 574.2V588.1M618.5 570.3V589.7M619.5 572.9V590.3M620.5 568.6V581.9M621.5 565.6V578.3M622.5 566.9V579.2M623.5 561.6V578.8M624.5 562.5V580.7M625.5 566.4V573.3M626.5 562.0V578.9M627.5 562.3V571.9M628.5 561.5V571.7M629.5 554.9V567.3M630.5 557.6V565.4M631.5 549.2V566.9M632.5 551.5V567.4M633.5 548.0V560.7M634.5 543.2V561.1M635.5 547.8V559.4M636.5 543.3V558.0M637.5 530.0V550.7M638.5 527.9V549.4M639.5 524.5V550.6M640.5 518.5V563.4M641.5 536.2V573.6M642.5 544.9V572.5M643.5 551.6V578.6M644.5 547.8V590.1M645.5 558.8V598.8M646.5 544.3V579.7M647.5 554.0V580.7M648.5 563.0V586.1M649.5 560.3V582.0M650.5 558.8V576.7M651.5 548.7V578.9M652.5 560.4V585.2M653.5 550.9V576.2M654.5 563.3V584.6M655.5 555.5V581.0M656.5 557.5V577.5M657.5 548.4V570.7M658.5 533.2V573.9M659.5 531.6V561.0M660.5 536.0V563.2M661.5 527.6V561.6M662.5 526.7V557.4M663.5 526.4V554.2M664.5 520.4V554.0M665.5 521.6V548.7M666.5 517.9V540.6M667.5 509.6V537.6M668.5 503.4V519.2M669.5 495.4V525.7M670.5 502.6V536.2M671.5 502.2V524.3M672.5 487.8V514.2M673.5 500.0V520.5M674.5 496.4V523.9M675.5 499.1V529.0M676.5 503.0V530.5M677.5 508.0V533.9M678.5 503.3V527.5M679.5 493.5V525.2M680.5 497.4V529.4M681.5 507.5V534.8M682.5 518.2V562.5M683.5 547.8V571.4M684.5 568.9V584.6"/><path d="M670.5 500.0V595.5M598.5 600.0V613.7M488.5 530.0V559.0M389.5 448.0V470.0M396.5 448.0V470.0M233.5 455.0V470.0M510.5 458.0V475.0M316.5 560.0V578.0M355.5 520.0V541.0"/></g>
</svg>
<div class="a" style="left:346px;top:358px;width:246px;height:90px;border:1px solid #9b9b9b;border-radius:5px 5px 0 0;background:#dcdcdc;overflow:hidden"><div class="a" style="left:0;top:0;width:244px;height:26px;background:linear-gradient(#ffffff 0px,#ffffff 1px,#e9e9e9 1.5px,#e2e2e2 8px,#d3d3d3 25px)"></div><div class="a" style="left:2px;top:25px;width:240px;height:61px;background:#fdfdfd"></div><div class="a" style="left:0;top:5px;width:244px;text-align:center;font:bold 14px 'Liberation Sans',sans-serif;color:#7b7b7b;line-height:17px">Progress Monitor</div><svg class="a" style="left:0;top:0" width="244" height="26" viewBox="0 0 244 26"><path d="M12.500 10.500 h8.500 l-4.250 5z" fill="#9a9a9a"/><path d="M222 9.500 l7.500 7.500 M229.500 9.500 l-7.500 7.500" stroke="#9a9a9a" stroke-width="2.200" fill="none"/></svg><div class="a" style="left:0;top:24px;width:244px;text-align:center;font:bold 14px 'DejaVu Sans',sans-serif;color:#26262e;line-height:17px;white-space:nowrap">running batch</div><div class="a" style="left:0;top:41px;width:245px;text-align:center;font:9px 'DejaVu Sans',sans-serif;color:#1c1c1c;line-height:11px;letter-spacing:0.14px;white-space:nowrap;-webkit-text-stroke:0.25px #1c1c1c">write /hom...walk3/product_20121210_12.png</div><div class="a" style="left:2px;top:52px;width:220px;height:20px;border:1px solid #7a8a99;border-top:2px solid #6382bf;border-left:2px solid #6382bf;background:#eee"><div style="width:69px;height:17px;background:#a3b8cc"></div></div><div class="a" style="left:223px;top:52px;width:19px;height:20px;border:1px solid #7a8a99;background:linear-gradient(#e3edf7,#fff 35%,#c5d8ea)"><svg class="a" style="left:0;top:0" width="17" height="18" viewBox="0 0 17 18"><rect x="1.500" y="2.500" width="14" height="13" rx="3" fill="#e34a55" stroke="#c9303c"/><rect x="2.500" y="3.500" width="12" height="5" rx="2" fill="#ee7a82" opacity="0.7"/><path d="M5.500 6 l6 6 M11.500 6 l-6 6" stroke="#fff" stroke-width="2.200" fill="none"/></svg></div><div class="a b12" style="left:0;top:73px;width:245px;text-align:center;letter-spacing:-0.12px">20/62 (51.0/min, eta 50.6 s)</div></div>
</body>
</html>
